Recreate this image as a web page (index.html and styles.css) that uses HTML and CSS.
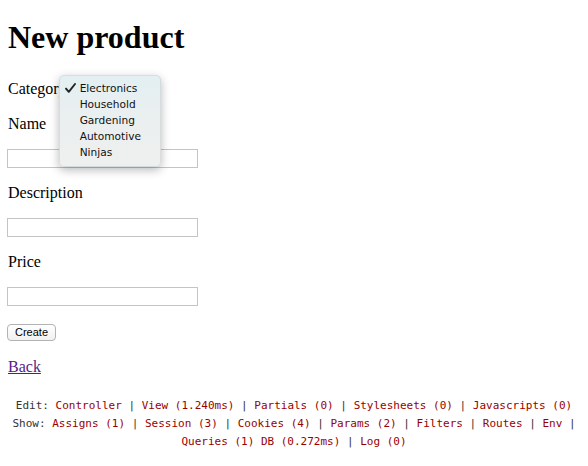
FILE: index.html
```
<!DOCTYPE html>
<html>
<head>
<meta charset="utf-8">
<title>New product</title>
<link rel="stylesheet" href="styles.css">
</head>
<body>
<div class="page">
  <h1 class="title">New product</h1>
  <form class="form">
    <div class="row row-category">
      <label class="label">Category</label>
      <span class="select-wrap">
        <select class="select"><option>Electronics</option></select>
        <div class="popup">
          <div class="item selected"><svg class="check" width="11" height="10" viewBox="0 0 11 10"><path d="M1 5.6 L3.8 8.8 L10 1" fill="none" stroke="#222" stroke-width="1.9" stroke-linecap="round" stroke-linejoin="round"/></svg>Electronics</div>
          <div class="item">Household</div>
          <div class="item">Gardening</div>
          <div class="item">Automotive</div>
          <div class="item">Ninjas</div>
        </div>
      </span>
    </div>
    <div class="row"><label class="label">Name</label></div>
    <div class="row-input"><input class="text" type="text"></div>
    <div class="row"><label class="label">Description</label></div>
    <div class="row-input"><input class="text" type="text"></div>
    <div class="row"><label class="label">Price</label></div>
    <div class="row-input"><input class="text" type="text"></div>
    <div class="row-button"><button class="button" type="button">Create</button></div>
    <div class="row"><a class="back" href="#">Back</a></div>
  </form>
  <div class="debug">
    Edit: <a href="#">Controller</a> | <a href="#">View (1.240ms)</a> | <a href="#">Partials (0)</a> | <a href="#">Stylesheets (0)</a> | <a href="#">Javascripts (0)</a><br>
    Show: <a href="#">Assigns (1)</a> | <a href="#">Session (3)</a> | <a href="#">Cookies (4)</a> | <a href="#">Params (2)</a> | <a href="#">Filters</a> | <a href="#">Routes</a> | <a href="#">Env</a> | <a href="#">Queries (1) DB (0.272ms)</a> | <a href="#">Log (0)</a>
  </div>
</div>
</body>
</html>
```
FILE: styles.css
```
html, body {
  margin: 0;
  padding: 0;
  background: #fff;
}
.page {
  padding: 0 8px;
  font-family: "Liberation Serif", "Times New Roman", serif;
  font-size: 16px;
  color: #000;
}
.title {
  margin: 19px 0 0;
  font-size: 32px;
  line-height: 37px;
  font-weight: bold;
}
.form {
  display: flex;
  flex-direction: column;
  gap: 16px;
  margin-top: 22px;
}
.row {
  height: 18px;
  line-height: 18px;
}
.row-category {
  height: 21px;
  line-height: 21px;
  display: flex;
  align-items: center;
  gap: 4px;
}
.select-wrap {
  position: relative;
  display: inline-block;
  width: 80px;
  height: 18px;
}
.select {
  width: 80px;
  height: 18px;
  font-size: 11px;
}
.popup {
  position: absolute;
  left: -12px;
  top: -5px;
  width: 102px;
  height: 92px;
  box-sizing: border-box;
  padding-top: 4px;
  border-radius: 5px;
  border: 1px solid rgba(0,0,0,0.08);
  background: linear-gradient(to bottom, #e3eff3 0%, #eaeff0 40%, #efefef 100%);
  box-shadow: 0 3px 10px rgba(0,0,0,0.28);
  font-family: "DejaVu Sans", Verdana, sans-serif;
  font-size: 10.6px;
  color: #111;
}
.item {
  height: 16px;
  line-height: 16px;
  padding-left: 20px;
  position: relative;
}
.check {
  position: absolute;
  left: 5px;
  top: 3px;
}
.row-input {
  height: 19px;
  display: flex;
}
.text {
  width: 191px;
  height: 19px;
  box-sizing: border-box;
  margin: 0 0 0 -1px;
  border: 1px solid #c4c4c4;
  padding: 1px 2px;
  background: #fff;
}
.row-button {
  height: 20px;
  display: flex;
  align-items: center;
}
.button {
  height: 17px;
  width: 49px;
  margin: 0 0 0 -1px;
  padding: 0;
  border: 1px solid #b3b3b3;
  border-radius: 4px;
  background: linear-gradient(to bottom, #ffffff, #f1f1f1);
  font-family: "Liberation Sans", Arial, sans-serif;
  font-size: 11px;
  line-height: 15px;
  color: #000;
}
.back {
  color: #551a8b;
  text-decoration: underline;
}
.debug {
  margin-top: 21px;
  font-family: "DejaVu Sans Mono", Menlo, monospace;
  font-size: 11px;
  line-height: 18px;
  text-align: center;
  color: #333;
}
.debug a {
  color: #900;
  text-decoration: none;
}
```
